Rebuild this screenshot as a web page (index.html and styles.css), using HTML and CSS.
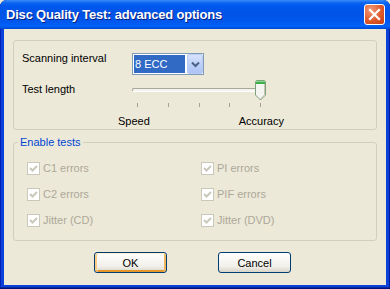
FILE: index.html
```html
<!DOCTYPE html>
<html lang="en">
<head>
    <meta charset="UTF-8">
    <title>Disc Quality Test: advanced options</title>
    <link rel="stylesheet" href="styles.css">
</head>
<body>
    <div class="window">
        <div class="titlebar">
            <span class="title">Disc Quality Test: advanced options</span>
            <button class="close-btn" aria-label="Close">
                <svg width="13" height="13" viewBox="0 0 13 13">
                    <path d="M2 2 L11 11 M11 2 L2 11" stroke="#fff" stroke-width="2.2" stroke-linecap="square"/>
                </svg>
            </button>
        </div>

        <div class="client">
            <div class="group options">
                <div class="row">
                    <span class="row-label scan-label">Scanning interval</span>
                    <div class="combo">
                        <span class="combo-value">8 ECC</span>
                        <span class="combo-btn">
                            <svg width="9" height="7" viewBox="0 0 9 7">
                                <path d="M1 1.5 L4.5 5 L8 1.5" fill="none" stroke="#4D6185" stroke-width="2"/>
                            </svg>
                        </span>
                    </div>
                </div>
                <div class="row slider-row">
                    <span class="row-label length-label">Test length</span>
                    <div class="slider">
                        <div class="track-area">
                            <div class="track"></div>
                            <svg class="thumb" width="11" height="21" viewBox="0 0 11 21">
                                <path d="M1.5 0.5 H9.5 L10.5 1.5 V15 L5.5 20 L0.5 15 V1.5 Z" fill="#F4F4F0" stroke="#7BA07B"/>
                                <rect x="1" y="1" width="9" height="3" fill="#3DB049"/>
                                <rect x="1" y="1" width="9" height="1" fill="#8DD88F"/>
                                <path d="M9.5 4 V14.8 L5.5 18.8" fill="none" stroke="#C9C6B6"/>
                            </svg>
                        </div>
                        <div class="ticks">
                            <span></span><span></span><span></span><span></span><span></span>
                        </div>
                        <div class="scale-labels">
                            <span>Speed</span>
                            <span>Accuracy</span>
                        </div>
                    </div>
                </div>
            </div>

            <fieldset class="group tests">
                <legend>Enable tests</legend>
                <div class="checks">
                    <label class="check"><span class="box"><svg width="11" height="11" viewBox="0 0 11 11"><path d="M2 5 L4.5 7.5 L9 3" fill="none" stroke="#CAC8BB" stroke-width="2"/></svg></span>C1 errors</label>
                    <label class="check"><span class="box"><svg width="11" height="11" viewBox="0 0 11 11"><path d="M2 5 L4.5 7.5 L9 3" fill="none" stroke="#CAC8BB" stroke-width="2"/></svg></span>PI errors</label>
                    <label class="check"><span class="box"><svg width="11" height="11" viewBox="0 0 11 11"><path d="M2 5 L4.5 7.5 L9 3" fill="none" stroke="#CAC8BB" stroke-width="2"/></svg></span>C2 errors</label>
                    <label class="check"><span class="box"><svg width="11" height="11" viewBox="0 0 11 11"><path d="M2 5 L4.5 7.5 L9 3" fill="none" stroke="#CAC8BB" stroke-width="2"/></svg></span>PIF errors</label>
                    <label class="check"><span class="box"><svg width="11" height="11" viewBox="0 0 11 11"><path d="M2 5 L4.5 7.5 L9 3" fill="none" stroke="#CAC8BB" stroke-width="2"/></svg></span>Jitter (CD)</label>
                    <label class="check"><span class="box"><svg width="11" height="11" viewBox="0 0 11 11"><path d="M2 5 L4.5 7.5 L9 3" fill="none" stroke="#CAC8BB" stroke-width="2"/></svg></span>Jitter (DVD)</label>
                </div>
            </fieldset>

            <div class="buttons">
                <button class="btn default">OK</button>
                <button class="btn">Cancel</button>
            </div>
        </div>
    </div>
</body>
</html>
```

FILE: styles.css
```css
/* Window frame */
body {
    margin: 0;
    width: 390px;
    height: 289px;
    overflow: hidden;
    background: #ECE9D8;
    font-family: "Liberation Sans", Arial, sans-serif;
    font-size: 11px;
    color: #000;
}

.window {
    width: 390px;
    height: 289px;
    display: flex;
    flex-direction: column;
    background: #0842D8;
    border-radius: 7px 7px 0 0;
    box-shadow: inset 0 -1px 0 #001080, inset 0 -2px 0 #0A2A9A, inset 1px 0 0 #0022B8, inset -1px 0 0 #001A9A;
}

.titlebar {
    height: 29px;
    display: flex;
    align-items: center;
    justify-content: space-between;
    padding: 0 5px 0 6px;
    border-radius: 7px 7px 0 0;
    background: linear-gradient(to bottom, #3B8CF5 0, #0A64F0 3px, #0058EE 6px, #0053E6 14px, #0058EE 22px, #0062F8 26px, #0047D2 29px);
}

.title {
    color: #fff;
    font-weight: bold;
    font-size: 13px;
    letter-spacing: -0.2px;
    text-shadow: 1px 1px 0 #0A1E80;
}

.close-btn {
    width: 21px;
    height: 21px;
    padding: 0;
    display: flex;
    align-items: center;
    justify-content: center;
    border: 1px solid #fff;
    border-radius: 3px;
    background: radial-gradient(circle at 30% 25%, #F09A76, #E05A2C 55%, #C13C12);
}

.client {
    flex: 1;
    margin: 0 4px 4px 4px;
    background: #ECE9D8;
}

/* Group boxes */
.group {
    border: 1px solid #D0D0BF;
    border-radius: 3px;
    box-sizing: border-box;
}

.options {
    margin: 11px 9px 0 9px;
    height: 90px;
    padding: 12px 0 0 8px;
}

.row {
    display: flex;
}

.row-label {
    width: 110px;
    flex-shrink: 0;
}

.scan-label {
    margin-top: -1px;
}

/* Combo box */
.combo {
    width: 72px;
    height: 22px;
    box-sizing: border-box;
    border: 1px solid #7F9DB9;
    background: #fff;
    display: flex;
}

.combo-value {
    flex: 1;
    margin: 1px 2px 1px 1px;
    padding-left: 1px;
    background: #316AC5;
    color: #fff;
    line-height: 18px;
}

.combo-btn {
    width: 16px;
    box-sizing: border-box;
    border: 1px solid #BACCF4;
    border-radius: 2px;
    background: linear-gradient(to bottom, #D7E3FD, #B9CDF8 60%, #AFC4F5);
    display: flex;
    align-items: center;
    justify-content: center;
}

/* Slider */
.slider-row {
    margin-top: 5px;
}

.length-label {
    padding-top: 3px;
}

.slider {
    width: 136px;
}

.track-area {
    position: relative;
    height: 21px;
}

.track {
    position: absolute;
    left: 0;
    right: 3px;
    top: 8px;
    height: 4px;
    box-sizing: border-box;
    border-top: 1px solid #ACA899;
    border-left: 1px solid #ACA899;
    border-bottom: 1px solid #fff;
    border-radius: 2px;
    background: #F3F3EF;
}

.thumb {
    position: absolute;
    left: 123px;
    top: 0;
}

.ticks {
    display: flex;
    justify-content: space-between;
    margin: 2px 7px 0 5px;
    height: 4px;
}

.ticks span {
    width: 1px;
    background: #A5A294;
}

.scale-labels {
    display: flex;
    justify-content: space-between;
    margin: 8px 0 0 -14px;
    width: 166px;
}

/* Enable tests */
.tests {
    margin: 6px 9px 0 9px;
    padding: 6px 0 7px 0;
    min-width: 0;
}

.tests legend {
    margin-left: 4px;
    padding: 0 2px;
    color: #0046D5;
    line-height: 13px;
}

.checks {
    display: grid;
    grid-template-columns: 174px 1fr;
    grid-auto-rows: 26px;
    margin-left: 13px;
}

.check {
    display: flex;
    align-items: center;
    gap: 3px;
    color: #ACA899;
}

.box {
    width: 13px;
    height: 13px;
    box-sizing: border-box;
    border: 1px solid #CAC8BB;
    background: #fff;
    display: flex;
    align-items: center;
    justify-content: center;
}

/* Buttons */
.buttons {
    display: flex;
    gap: 51px;
    padding: 11px 0 0 90px;
}

.btn {
    width: 73px;
    height: 21px;
    padding: 0;
    border: 1px solid #003C74;
    border-radius: 3px;
    background: linear-gradient(to bottom, #fff, #F1F0EA 70%, #D8D4C8);
    font-family: "Liberation Sans", Arial, sans-serif;
    font-size: 11px;
    color: #000;
}

.btn.default {
    box-shadow: inset 0 1px 0 #FFF0CF, inset 2px 0 0 #F8CC82, inset -2px 0 0 #F0B860, inset 0 -2px 0 #E5972C;
}
```
